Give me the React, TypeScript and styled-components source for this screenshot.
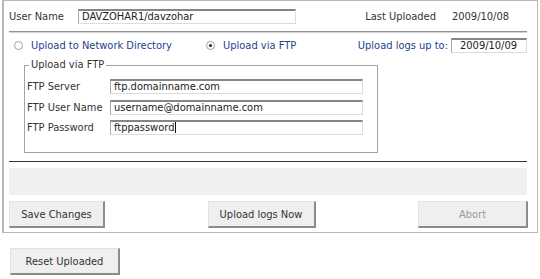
import { Fragment } from "react";
import { createGlobalStyle, styled } from "styled-components";

const GlobalStyle = createGlobalStyle`
  body {
    margin: 0;
    background: #fff;
    font-family: "DejaVu Sans Condensed", "DejaVu Sans", sans-serif;
    font-size: 11px;
    color: #333;
  }
`;

const Page = styled.div`
  width: 540px;
  padding: 0 0 0 2px;
  box-sizing: border-box;
`;

const Panel = styled.section`
  width: 536px;
  box-sizing: border-box;
  border: 1px solid #b8b8b8;
  border-left-width: 2px;
  padding: 0 10px 4px 5px;
`;

const TopRow = styled.div`
  display: flex;
  align-items: center;
  height: 29px;
  padding-right: 18px;
  padding-top: 1px;
`;

const Label = styled.span<{ $w?: number }>`
  width: ${(p) => (p.$w ? `${p.$w}px` : "auto")};
  flex: none;
  color: #333;
  white-space: nowrap;
`;

const Field = styled.div<{ $w: number; $pad?: number }>`
  width: ${(p) => p.$w}px;
  height: 15px;
  box-sizing: border-box;
  border: 1px solid #dcdcdc;
  border-top: 2px solid #858585;
  border-left-color: #a8a8a8;
  padding: 0 0 0 ${(p) => p.$pad ?? 3}px;
  line-height: 12px;
  color: #222;
  white-space: nowrap;
  overflow: hidden;
  background: #fff;
`;

const Caret = styled.span`
  display: inline-block;
  width: 1px;
  height: 11px;
  margin-left: 1px;
  vertical-align: -2px;
  background: #111;
`;

const Spacer = styled.div`
  flex: 1;
`;

const DateText = styled.span`
  margin-left: 16px;
  color: #333;
`;

const Rule = styled.div<{ $dark?: boolean }>`
  height: ${(p) => (p.$dark ? "1px" : "2px")};
  box-sizing: border-box;
  background: ${(p) => (p.$dark ? "#333" : "#8f8f8f")};
  border-bottom: ${(p) => (p.$dark ? "none" : "1px solid #d4d4d4")};
  width: 518px;
`;

const RadioRow = styled.div`
  display: flex;
  align-items: center;
  height: 24px;
  padding-left: 5px;
`;

const Radio = styled.span<{ $checked?: boolean }>`
  width: 9px;
  height: 9px;
  flex: none;
  border-radius: 50%;
  border: 1px solid #a0a0a0;
  box-sizing: border-box;
  display: inline-flex;
  align-items: center;
  justify-content: center;
  margin-right: 8px;
  &::after {
    content: "";
    width: 3px;
    height: 3px;
    border-radius: 50%;
    background: ${(p) => (p.$checked ? "#222" : "transparent")};
  }
`;

const Option = styled.label<{ $w: number }>`
  display: flex;
  align-items: center;
  width: ${(p) => p.$w}px;
  color: #243f8c;
  white-space: nowrap;
`;

const BlueLabel = styled.span`
  color: #243f8c;
  margin-left: auto;
  margin-right: 3px;
  white-space: nowrap;
`;

const GroupBox = styled.div`
  position: relative;
  width: 354px;
  height: 88px;
  box-sizing: border-box;
  margin: 8px 0 8px 15px;
  border: 1px solid #a4a4a4;
  padding: 13px 13px 0 2px;
  display: grid;
  grid-template-columns: 83px 253px;
  grid-auto-rows: 15px;
  row-gap: 5.5px;
  align-items: center;
`;

const Legend = styled.span`
  position: absolute;
  top: -8px;
  left: 4px;
  padding: 0 2px;
  background: #fff;
  color: #333;
  line-height: 14px;
`;

const StatusBar = styled.div`
  height: 27px;
  width: 518px;
  margin: 6px 0;
  background: #efefef;
`;

const ButtonRow = styled.div`
  display: flex;
  justify-content: space-between;
  width: 519px;
`;

const Button = styled.button<{ $w: number }>`
  width: ${(p) => p.$w}px;
  height: 27px;
  box-sizing: border-box;
  background: #efefef;
  border: 1px solid #e2e2e2;
  border-right: 2px solid #8c8c8c;
  border-bottom: 2px solid #8c8c8c;
  font-family: inherit;
  font-size: 11px;
  color: ${(p) => (p.disabled ? "#9a9a9a" : "#333")};
  padding: 0;
  cursor: default;
`;

const Footer = styled.div`
  padding: 15px 0 0 8px;
`;

const ftpRows = [
  { label: "FTP Server", value: "ftp.domainname.com" },
  { label: "FTP User Name", value: "username@domainname.com" },
  { label: "FTP Password", value: "ftppassword", focused: true },
];

export default function App() {
  return (
    <Page>
      <GlobalStyle />
      <Panel>
        <TopRow>
          <Label $w={69}>User Name</Label>
          <Field $w={218}>DAVZOHAR1/davzohar</Field>
          <Spacer />
          <Label>Last Uploaded</Label>
          <DateText>2009/10/08</DateText>
        </TopRow>
        <Rule />
        <RadioRow>
          <Option $w={192}>
            <Radio />
            Upload to Network Directory
          </Option>
          <Option $w={120}>
            <Radio $checked />
            Upload via FTP
          </Option>
          <BlueLabel>Upload logs up to:</BlueLabel>
          <Field $w={76} $pad={8}>
            2009/10/09
          </Field>
        </RadioRow>
        <GroupBox>
          <Legend>Upload via FTP</Legend>
          {ftpRows.map((r) => (
            <Fragment key={r.label}>
              <Label>{r.label}</Label>
              <Field $w={253}>
                {r.value}
                {r.focused && <Caret />}
              </Field>
            </Fragment>
          ))}
        </GroupBox>
        <Rule $dark />
        <StatusBar />
        <ButtonRow>
          <Button $w={96}>Save Changes</Button>
          <Button $w={108}>Upload logs Now</Button>
          <Button $w={110} disabled>
            Abort
          </Button>
        </ButtonRow>
      </Panel>
      <Footer>
        <Button $w={110}>Reset Uploaded</Button>
      </Footer>
    </Page>
  );
}
